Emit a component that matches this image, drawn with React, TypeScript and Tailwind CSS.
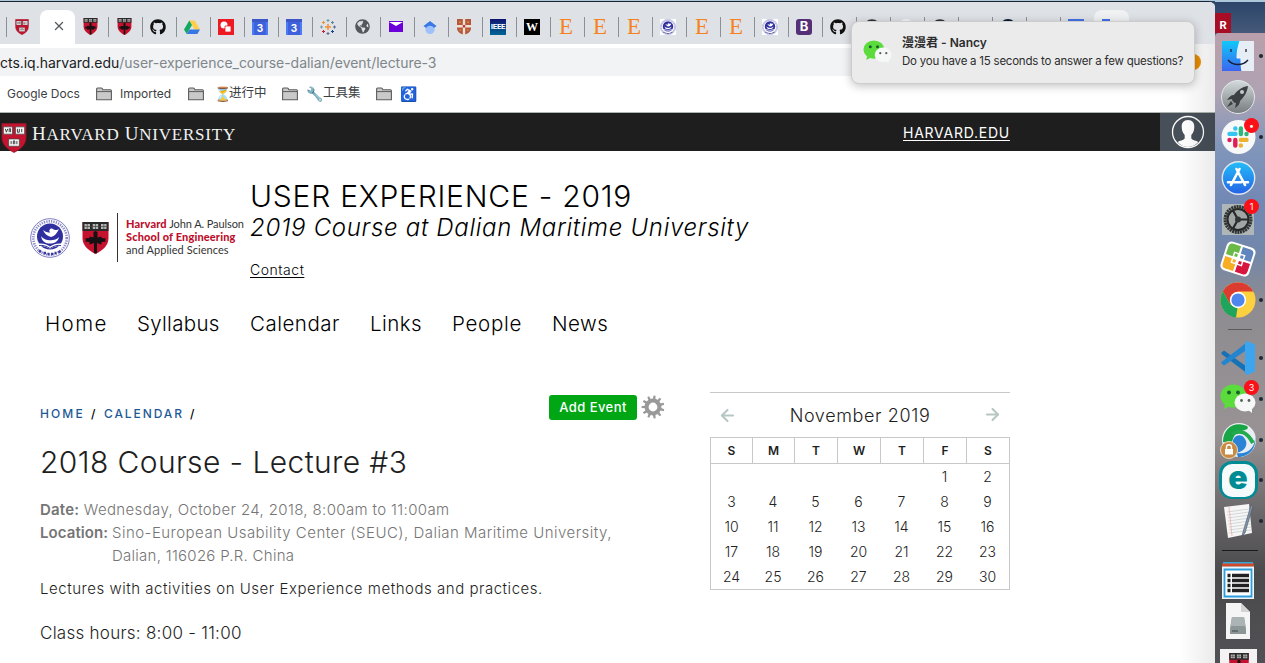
import React, { ReactNode } from "react";
import { FaGithub, FaGlobeAmericas } from "react-icons/fa";
import { ArrowLeft, ArrowRight, X } from "lucide-react";

function HarvardShield({ className }: { className: string }) {
  return (
    <svg viewBox="0 0 26 31" className={className}>
      <path d="M0.5 .5h25v14c0 8-5.500 12.500-12.500 16C6 27 .5 22.500 .5 14.500z" fill="#c4122f" stroke="#8b1a28" strokeWidth=".7" />
      <g fill="#fff" stroke="#444" strokeWidth=".8">
        <path d="M2 4h9.500v7.500H2zM14.500 4H24v7.500h-9.500zM7.500 16.500h11v7.500h-11z" />
      </g>
      <g fill="none" stroke="#333" strokeWidth="1">
        <path d="M4 6l1.200 3.500L6.500 6M8 9.500V6h1.500v3.500M16.500 6v3.500h2V6M21 6v3.500M10 18.500v3.500M12.300 22v-3.500h1.500V22M16 18.500v3.500" />
      </g>
    </svg>
  );
}

function SeasShield({ className }: { className: string }) {
  return (
    <svg viewBox="0 0 26 32" className={className}>
      <path d="M0 0h26v16c0 7-5 12-13 16C5 28 0 23 0 16z" fill="#c4122f" />
      <path d="M0 0h26v9H0z" fill="#2a2a2a" />
      <path d="M2 2h5.500v5H2zM10.200 2h5.500v5h-5.500zM18.500 2H24v5h-5.500z" fill="#b5b5b5" />
      <path d="M4.700 2v5M13 2v5M21.300 2v5M2 4.500h22" stroke="#444" strokeWidth=".7" />
      <path d="M11.500 31.200h3V21l4.500 1.500v-2.500l4.500-.5-1-1.500 1-1.500-4.500-.5v-1.500l-4 1V10l-2-1-2 1v5.500l-4-1V16l-4.500.5 1 1.500-1 1.500 4.500.5v2.500l4.500-1.500z" fill="#171012" />
    </svg>
  );
}

function Seal({ className }: { className: string }) {
  return (
    <svg viewBox="0 0 40 40" className={className}>
      <circle cx="20" cy="20" r="20" fill="#fff" />
      <circle cx="20" cy="20" r="19.300" fill="none" stroke="#5a5ab0" strokeWidth=".8" />
      <circle cx="20" cy="20" r="16.700" fill="none" stroke="#8a8ac8" strokeWidth="2.600" strokeDasharray="1.300 1.100" />
      <circle cx="20" cy="18.500" r="13" fill="#2f2f9f" />
      <path d="M13 12c2 4 4 6 8 7 4-1 6-4 8-8-3 2-4 1-7-.5-2-.5-4 2.500-1.500 4-3 0-5-.5-7.500-2.500zM11 18c3 5 14 6 18 1-1 5-5 6.500-9 6.500s-8-1.500-9-7.500z" fill="#fff" />
      <path d="M7 26c5-1 9 0 13 2.500C24 26 28 25 33 26v2.500c-5-1-9 0-13 2.500-4-2.500-8-3.500-13-2.500z" fill="#fff" />
      <path d="M9 27.500c4-.5 7.500.5 11 3 3.500-2.500 7-3.500 11-3" fill="none" stroke="#3a3a9d" />
      <path d="M9 32.500l2 1.500m2.500 1h2.500m1.500 1h2m1.500 0h2m1.500-1h2m2-.500l2-1.500" stroke="#3a3a9d" strokeWidth="2.600" />
    </svg>
  );
}

function WeChat({ className }: { className: string }) {
  return (
    <svg viewBox="0 0 36 30" className={className}>
      <ellipse cx="13.500" cy="12" rx="13" ry="11.500" fill="#5bdc3c" />
      <path d="M5 20l-1 5 6-3z" fill="#5bdc3c" />
      <circle cx="9" cy="8.500" r="1.900" fill="#14622a" />
      <circle cx="18" cy="8.500" r="1.900" fill="#14622a" />
      <ellipse cx="25" cy="18.500" rx="10.500" ry="9" fill="#f6f8f7" />
      <path d="M28 26l4 3v-5z" fill="#f6f8f7" />
      <circle cx="21.500" cy="16.500" r="1.400" fill="#55605c" />
      <circle cx="29" cy="16.500" r="1.400" fill="#55605c" />
    </svg>
  );
}

function CalendarIcon() {
  return (
    <svg viewBox="0 0 16 16" className="size-4">
      <path d="M0 0h16v16H0z" fill="#4a7df5" />
      <path d="M0 0h16v3H0z" fill="#3c57c7" />
      <path d="M2 3h12v13H2z" fill="#3f62dc" />
      <text x="8" y="12.500" textAnchor="middle" fontSize="10" fontWeight="700" fontFamily="Inter, sans-serif" fill="#fff">3</text>
    </svg>
  );
}

const Etsy = () => <span className="font-['Liberation_Serif',serif] text-[23px] leading-4 text-[#f58220]">E</span>;

const tabs: ReactNode[] = [
  <SeasShield className="h-[17px] w-[15px]" />,
  <SeasShield className="h-[17px] w-[15px]" />,
  <FaGithub className="size-4 text-[#111]" />,
  <svg viewBox="0 0 16 16" className="size-4">
    <path d="M5.300 1.500h5.400L16 10.500h-5.400z" fill="#ffcf48" />
    <path d="M5.300 1.500L8 6 2.700 15 0 10.500z" fill="#11a861" />
    <path d="M5.400 10.500H16L13.300 15H2.700z" fill="#3777e3" />
  </svg>,
  <svg viewBox="0 0 16 16" className="size-4">
    <path d="M0 0h16v16H0z" fill="#ec1b23" />
    <circle cx="6" cy="6" r="3.500" fill="#fff" />
    <path d="M7 7h6v6H7z" fill="#fff" stroke="#ec1b23" strokeWidth=".8" />
  </svg>,
  <CalendarIcon />,
  <CalendarIcon />,
  <svg viewBox="0 0 16 16" className="size-4" fill="none" strokeWidth="1">
    <path d="M8 5v6M5 8h6" stroke="#f28e2b" strokeWidth="1.500" />
    <path d="M3.500 2v3M2 3.500h3" stroke="#eb912c" />
    <path d="M3.500 11v3M2 12.500h3" stroke="#c72037" />
    <path d="M12.500 2v3M11 3.500h3" stroke="#59879b" />
    <path d="M12.500 11v3M11 12.500h3" stroke="#1f447e" />
    <path d="M8 0v3M6.500 1.500h3M1.500 6.500v3M0 8h3" stroke="#7099a6" />
    <path d="M8 13v3M6.500 14.500h3M14.500 6.500v3M13 8h3" stroke="#5b6591" />
  </svg>,
  <FaGlobeAmericas className="size-[15px] text-[#55585b]" />,
  <svg viewBox="0 0 14 11" className="h-[11px] w-3.5">
    <path d="M0 0h14v11H0z" fill="#6b00d8" />
    <path d="M0 1h14L7 5z" fill="#fff" />
  </svg>,
  <svg viewBox="0 0 16 16" className="size-4">
    <circle cx="8" cy="10.500" r="4.600" fill="#9fc1fb" />
    <path d="M1.500 7L8 2l6.500 5L12 9c-2-3-6-3-8 0z" fill="#3b78e7" />
  </svg>,
  <svg viewBox="0 0 14 16" className="h-4 w-3.5">
    <path d="M0 0h14v9c0 4-4 6-7 7-3-1-7-3-7-7z" fill="#b5573c" />
    <path d="M5.800 0h2.400v6H14v2.400H8.200V16H5.800V8.400H0V6h5.800z" fill="#f1dfd2" />
    <path d="M5.800 6h2.400v2.400H5.800z" fill="#b23a35" />
    <path d="M2 2.500h2v1.500H2zm8 0h2v1.500h-2zM2.500 10.500h1.500V12H2.500zm7.500 0h1.500V12H10z" fill="#c8923b" />
  </svg>,
  <span className="flex size-4 items-center justify-center bg-linear-to-b from-[#101070] to-[#006594] font-[Roboto,sans-serif] text-[8px] font-bold leading-none tracking-[-0.3px] text-white">IEEE</span>,
  <span className="flex size-4 items-center justify-center bg-black font-['Liberation_Serif',serif] text-[12px] font-bold leading-none text-white">W</span>,
  <Etsy />,
  <Etsy />,
  <Etsy />,
  <span className="size-4 bg-white"><Seal className="size-4" /></span>,
  <Etsy />,
  <Etsy />,
  <span className="size-4 bg-white"><Seal className="size-4" /></span>,
  <span className="flex size-4 items-center justify-center rounded-[3px] bg-[#563076] font-[Inter,sans-serif] text-[13px] font-bold leading-none text-white">B</span>,
  <FaGithub className="size-4 text-[#111]" />,
  <FaGithub className="size-4 text-[#333]" />,
  <span className="size-4 rounded-full bg-[#f6f6f6]" />,
  <FaGithub className="size-4 text-[#333]" />,
  null,
  <span className="size-4 rounded-full bg-[#0b1830]" />,
  null,
  <span className="size-4 bg-[#4472e8]" />,
];

function TabStrip() {
  return (
    <div className="flex h-[42px] items-end bg-[#dee1e6] pl-1.5">
      <div className="flex h-[35px] w-[34px] items-center">
        <span className="h-5 w-px bg-[#8d9094]" />
        <HarvardShield className="ml-2 h-4 w-3.5" />
      </div>
      <div className="flex h-[34px] w-[35px] items-center justify-center rounded-t-lg bg-white pb-0.5 pl-[3px]">
        <X className="size-3.5 text-[#55585c]" strokeWidth={2.2} />
      </div>
      {tabs.map((icon, i) => (
        <div key={i} className={i === 0 ? "-ml-px flex h-[35px] w-[34px] items-center" : "flex h-[35px] w-[34px] items-center"}>
          <span className={i === 0 ? "h-5 w-px" : "h-5 w-px bg-[#8d9094]"} />
          <span className="ml-1 flex w-[22px] items-center justify-center">{icon}</span>
        </div>
      ))}
      <div className="flex h-[34px] w-[35px] justify-center rounded-t-lg bg-[#f0f1f3] pt-[9px]">
        <span className="mr-3 h-4 w-2 bg-[#4472e8]" />
      </div>
    </div>
  );
}

function Folder() {
  return (
    <svg viewBox="0 0 16 14" className="h-3.5 w-4">
      <path d="M.6 12.800V2q0-1 1-1h3.600q.8 0 1.200.7l.5 1h7.500q1 0 1 1v9.100z" fill="#c9c9c9" stroke="#5c5c5c" strokeWidth="1.100" />
      <path d="M1 4.600h14" stroke="#5c5c5c" />
    </svg>
  );
}

function Bookmarks() {
  return (
    <div className="flex h-[37px] items-center border-b border-[#aeb5b1] bg-white pb-px pl-[7px] font-[Inter,'Noto_Sans_CJK_SC',sans-serif] text-[12px] tracking-[-0.02px] text-[#3c4043]">
      <span className="w-[89px]">Google Docs</span>
      <Folder />
      <span className="ml-2 w-[68px]">Imported</span>
      <Folder />
      <span className="ml-2.5 flex w-[68px] items-center whitespace-nowrap"><span className="w-[15px] text-[14px]">⏳</span><span className="text-[12.5px]">进行中</span></span>
      <Folder />
      <span className="ml-2 flex w-[70px] items-center whitespace-nowrap"><span className="w-[17px] text-[14px]">🔧</span><span className="text-[12.5px]">工具集</span></span>
      <Folder />
      <span className="ml-2 text-[14px]">♿</span>
    </div>
  );
}

function HarvardBar() {
  return (
    <div className="flex h-[38px] items-center bg-[#1e1e1e] text-white">
      <HarvardShield className="ml-[1px] mt-3 h-[30px] w-[26px] shrink-0" />
      <span className="ml-[5px] w-[871px] whitespace-nowrap pt-0.5 font-['Liberation_Serif',serif] text-[17px] leading-none tracking-[0.8px] text-[#f2f2f2]"><span className="text-[19px]">H</span>ARVARD <span className="text-[19px]">U</span>NIVERSITY</span>
      <span className="w-[257px] text-[14px] tracking-[0.75px] underline underline-offset-2">HARVARD.EDU</span>
      <div className="flex h-full w-[55px] items-center justify-center bg-[#474f58]">
        <svg viewBox="0 0 34 34" className="size-[34px]">
          <circle cx="17" cy="17" r="15.500" fill="none" stroke="#fff" strokeWidth="1.300" />
          <path d="M17 5c-4.500 0-6.300 3-6.300 6.500 0 3.800 1 6.500 3 8.500v3.500c-1.500 2-5 2-7 3.500 5.500 6.500 15 6.500 20.600 0-2-1.500-5.500-1.500-7-3.500V20c2-2 3-4.700 3-8.500C23.300 8 21.500 5 17 5z" fill="#fff" />
        </svg>
      </div>
    </div>
  );
}

function Masthead() {
  return (
    <header className="flex h-[143px] pl-[30px] text-black">
      <div className="mt-[62px] flex h-[49px] w-[220px] items-center">
        <Seal className="size-10 shrink-0" />
        <SeasShield className="ml-3 h-8 w-[27px] shrink-0" />
        <div className="ml-2 h-full w-px shrink-0 bg-[#333]" />
        <div className="ml-2 whitespace-nowrap pb-0.5 font-[Lato,sans-serif] text-[11px] leading-[13px] text-[#333]">
          <div className="tracking-[-0.09px]"><b className="font-black tracking-[0.14px] text-[#bd0f2c]">Harvard</b> John A. Paulson</div>
          <div className="font-black tracking-[0.14px] text-[#bd0f2c]">School of Engineering</div>
          <div className="tracking-[0.06px]">and Applied Sciences</div>
        </div>
      </div>
      <div className="whitespace-nowrap pt-[27px]">
        <h1 className="text-[30px] font-light leading-9 tracking-[0.77px]">USER EXPERIENCE - 2019</h1>
        <p className="text-[24px] font-light italic leading-7 tracking-[0.7px]">2019 Course at Dalian Maritime University</p>
        <p className="mt-[18px] text-[14px] font-[350] leading-5 tracking-[0.52px]"><a className="underline underline-offset-2">Contact</a></p>
      </div>
    </header>
  );
}

function Nav() {
  return (
    <nav className="flex h-[60px] items-center whitespace-nowrap pl-[45px] text-[20.5px] font-[350] text-black">
      <a className="w-[92px] tracking-[1.4px]">Home</a>
      <a className="w-[113px] tracking-[0.3px]">Syllabus</a>
      <a className="w-[120px] tracking-[0.5px]">Calendar</a>
      <a className="w-[82px] tracking-[0.45px]">Links</a>
      <a className="w-[100px] tracking-[0.7px]">People</a>
      <a className="tracking-[0.45px]">News</a>
    </nav>
  );
}

function Gear() {
  return (
    <svg viewBox="0 0 24 24" className="ml-1 size-6">
      <g fill="#999">
        {Array.from({ length: 11 }, (_, i) => (
          <path key={i} d="M10.700 4.500L11 .6h2l.3 3.900z" transform={`rotate(${i * 32.727 + 8} 12 12)`} />
        ))}
      </g>
      <circle cx="12" cy="12" r="6.400" fill="none" stroke="#999" strokeWidth="4" />
    </svg>
  );
}

function EventDetails() {
  return (
    <article className="w-[640px] whitespace-nowrap text-[#1e1e1e]">
      <div className="flex h-10 items-start pt-[3px]">
        <div className="mt-[9px] flex w-[509px] text-[12px] font-medium leading-5 text-[#1e5a96]">
          <a className="w-[51px] tracking-[2.1px]">HOME</a>
          <span className="w-[13px] text-black">/</span>
          <a className="w-[86px] tracking-[1.9px]">CALENDAR</a>
          <span className="text-black">/</span>
        </div>
        <a className="flex h-[25px] w-[88px] items-center justify-center rounded-[3px] bg-[#00a613] text-[13px] font-medium tracking-[0.45px] text-white">Add Event</a>
        <Gear />
      </div>
      <h2 className="mt-2.5 h-10 text-[30px] font-light leading-10 tracking-[0.39px]">2018 Course - Lecture #3</h2>
      <div className="mt-4 text-[15px] font-[350] leading-[23px] text-[#757575]">
        <p className="tracking-[0.36px]"><b className="font-semibold tracking-[0.2px]">Date:</b> Wednesday, October 24, 2018, 8:00am to 11:00am</p>
        <div className="flex">
          <b className="w-[72px] font-semibold tracking-[0.07px]">Location:</b>
          <p><span className="tracking-[0.48px]">Sino-European Usability Center (SEUC), Dalian Maritime University,</span><br /><span className="tracking-[0.27px]">Dalian, 116026 P.R. China</span></p>
        </div>
      </div>
      <p className="mt-2.5 text-[15px] font-[350] leading-[23px] tracking-[0.53px]">Lectures with activities on User Experience methods and practices.</p>
      <p className="mt-[22px] text-[17px] font-[350] leading-[23px] tracking-[0.26px]">Class hours: 8:00 - 11:00</p>
    </article>
  );
}

function Calendar() {
  const days: (number | null)[] = [null, null, null, null, null, ...Array.from({ length: 30 }, (_, i) => i + 1)];
  return (
    <aside className="ml-[30px] w-[300px] border-t border-[#c8c8c8] text-[#1e1e1e]">
      <div className="flex h-11 items-center justify-between px-2">
        <ArrowLeft className="size-[19px] text-[#b5c7c3]" strokeWidth={2.6} />
        <span className="text-[18px] font-[350] tracking-[0.62px]">November 2019</span>
        <ArrowRight className="mb-0.5 size-[19px] text-[#b5c7c3]" strokeWidth={2.6} />
      </div>
      <div className="border border-[#c8c8c8]">
        <div className="grid h-[26px] grid-cols-[42px_42px_43px_43px_43px_43px_42px] border-b border-[#c8c8c8] text-[12px] font-semibold leading-[26px]">
          {["S", "M", "T", "W", "T", "F", "S"].map((d, i) => (
            <span key={i} className="border-r border-[#c8c8c8] text-center last:border-r-0">{d}</span>
          ))}
        </div>
        <div className="grid grid-cols-[41px_42px_43px_43px_43px_43px_43px] text-center text-[14px] font-[350] leading-[25px] text-[#222]">
          {days.map((d, i) => <span key={i}>{d}</span>)}
        </div>
      </div>
    </aside>
  );
}

function Notification() {
  return (
    <div className="absolute left-[851px] top-[21px] flex h-[63px] w-[344px] rounded-lg border border-[#cdcdcf] bg-[#ebebec] pl-[11px] pt-3 text-[#2d2d2d] shadow-[0_2px_10px_rgba(0,0,0,0.25)]">
      <WeChat className="mt-1.5 h-6 w-[29px]" />
      <div className="ml-2.5 whitespace-nowrap font-[Inter,'Noto_Sans_CJK_SC',sans-serif] leading-[18px]">
        <div className="text-[12px] font-semibold">漫漫君 - Nancy</div>
        <div className="text-[11.5px] tracking-[-0.23px]">Do you have a 15 seconds to answer a few questions?</div>
      </div>
    </div>
  );
}

const art = "size-9 overflow-visible";
type Item = { dot?: boolean; badge?: string; icon: ReactNode };

const dockTop: Item[] = [
  { dot: true, icon: (
    <svg viewBox="0 0 36 36" className={art}>
      <defs><linearGradient id="fin" x2="0" y2="1"><stop stopColor="#10c8fa" /><stop offset="1" stopColor="#3c66f0" /></linearGradient></defs>
      <path d="M2 3h32v30H2z" fill="#e6edf5" />
      <path d="M2 3h18c-2 6-3 11-3 17h4c0 5 0 9 1 13H2z" fill="url(#fin)" />
      <path d="M20 3c-2 6-3 11-3 17h4c0 5 0 9 1 13" fill="none" stroke="#f3f8ff" />
      <path d="M11 11v3M26 11v3" stroke="#223" strokeWidth="1.300" />
      <path d="M8 22c5 6 15 6 20 0" fill="none" stroke="#182038" strokeWidth="1.400" />
    </svg>) },
  { icon: (
    <svg viewBox="0 0 36 36" className={art}>
      <defs><linearGradient id="rok" x2="0" y2="1"><stop stopColor="#d2dadc" /><stop offset="1" stopColor="#777c7d" /></linearGradient></defs>
      <circle cx="18" cy="18" r="16.500" fill="url(#rok)" stroke="#e3e7e8" />
      <path d="M28 7c-7 1-11 5-14 9-3 0-5 2-7 5l5-1c0 2 2 4 4 4l-1 5c3-2 5-4 5-7 4-4 7-8 8-15z" fill="#3c4043" />
      <circle cx="22" cy="13" r="2" fill="#c3c9cb" />
      <path d="M11 22l-4 6 6-3" fill="#3c4043" />
    </svg>) },
  { dot: true, badge: "•", icon: (
    <svg viewBox="0 0 36 36" className={art}>
      <circle cx="18.500" cy="18" r="17" fill="#f7f8f8" />
      <g fill="none" strokeWidth="4.400" strokeLinecap="round">
        <path d="M15.300 9.500h.1M9.500 14.900h6" stroke="#36c5f0" />
        <path d="M20.900 9.500v5.500M26.500 14.900v.1" stroke="#2eb67d" />
        <path d="M26.500 20.900h-5.600M20.900 26.500h-.1" stroke="#ecb22e" />
        <path d="M15.300 26.500V21M9.500 20.900v.1" stroke="#e01e5a" />
      </g>
    </svg>) },
  { icon: (
    <svg viewBox="0 0 36 36" className={art}>
      <defs><linearGradient id="aps" x2="0" y2="1"><stop stopColor="#23bdf8" /><stop offset="1" stopColor="#2463e6" /></linearGradient></defs>
      <circle cx="18.500" cy="18" r="16.200" fill="url(#aps)" stroke="#e2e6ef" strokeWidth="1.400" />
      <path d="M19.500 9L11 25M16.500 9L25 25M8 22.300h13M25 22.300h3" fill="none" stroke="#fff" strokeWidth="2.600" strokeLinecap="round" />
    </svg>) },
  { badge: "1", icon: (
    <svg viewBox="0 0 36 36" className={art}>
      <path d="M2 3h32v31H2z" fill="#aeb6b8" />
      <circle cx="18" cy="18.500" r="13" fill="#8d9392" stroke="#303232" strokeWidth="3" strokeDasharray="2 .7" />
      <circle cx="18" cy="18.500" r="10.500" fill="#a0a6a5" stroke="#272929" strokeWidth="2" />
      <path d="M18 18.500H28M18 18.500L13 9.500M18 18.500L13 27.500" stroke="#272929" strokeWidth="2.200" />
      <circle cx="18" cy="18.500" r="3" fill="#333" />
    </svg>) },
  { icon: (
    <svg viewBox="0 0 36 36" className={art}>
      <g transform="rotate(18 18 18)">
        <rect x="3" y="3" width="30" height="30" rx="5" fill="#fff" />
        <path d="M9 5h8v12H5V9q0-4 4-4z" fill="#6bb946" />
        <path d="M19 5h8q4 0 4 4v8H19z" fill="#6185bd" />
        <path d="M5 19h12v12H9q-4 0-4-4z" fill="#f7ae24" />
        <path d="M19 19h12v8q0 4-4 4h-8z" fill="#d8153c" />
        <path d="M12 12h12v12H12z" fill="#fff" />
        <path d="M13.500 13.500h3v3h-3z" fill="#6bb946" /><path d="M19.500 13.500h3v3h-3z" fill="#6185bd" />
        <path d="M13.500 19.500h3v3h-3z" fill="#f7ae24" /><path d="M19.500 19.500h3v3h-3z" fill="#d8153c" />
      </g>
    </svg>) },
  { dot: true, icon: (
    <svg viewBox="0 0 36 36" className={art}>
      <circle cx="18" cy="18" r="17.500" fill="#fcd03f" />
      <path d="M18 18L10.500 22.500 2.800 9.200A17.500 17.500 0 0 1 33.200 9.500H18z" fill="#dc3c30" />
      <path d="M2.800 9.200L10.500 22.500l7 3.500-1.500 9.400A17.500 17.500 0 0 1 2.800 9.200z" fill="#1ea45b" />
      <circle cx="18" cy="18" r="8.200" fill="#fff" />
      <circle cx="18" cy="18" r="6.600" fill="#4c86ee" />
    </svg>) },
];

const dockApps: Item[] = [
  { dot: true, icon: (
    <svg viewBox="0 0 36 36" className={art}>
      <path d="M1.500 12.500L4 10.500 28 27.500V34L1.500 14z" fill="#1572b6" />
      <path d="M1.500 23.500L4 25.500 28 9V1.500L1.500 22z" fill="#2385cf" />
      <path d="M27 1l8 3.500v27L27 35l-2-2V3z" fill="#3da5ee" />
    </svg>) },
  { dot: true, badge: "3", icon: <WeChat className="h-[30px] w-9" /> },
  { dot: true, icon: (
    <svg viewBox="0 0 36 36" className={art}>
      <circle cx="19" cy="18" r="17" fill="#e9eef2" />
      <path d="M3 20C3 8 12 0 24 3c5 1 5 4 1 5-8 1-12 5-13 13z" fill="#17a545" />
      <path d="M13 21c-1-7 8-11 12-4 4 6-1 13-9 14 12 2 20-6 19-17 2 11-5 21-17 21z" fill="#2b83d8" />
      <path d="M12 12c8-5 15-2 21 9" fill="none" stroke="#23aa4c" strokeWidth="4" />
      <circle cx="9" cy="28" r="8.500" fill="#c98a43" stroke="#ecd9bf" />
      <path d="M5 27h8v5.500H5z" fill="#fff" />
      <path d="M6.500 27v-2c0-3 5-3 5 0v2" fill="none" stroke="#fff" strokeWidth="1.400" />
    </svg>) },
  { dot: true, icon: (
    <span className="flex h-[38px] w-[39px] shrink-0 items-center justify-center rounded-[13px] bg-[#018c95]">
      <span className="flex size-[33px] items-center justify-center rounded-[10px] bg-[#f5fafa] pb-1 font-[Inter,sans-serif] text-[32px] font-black leading-none text-[#018c95]">e</span>
    </span>) },
  { dot: true, icon: (
    <svg viewBox="0 0 36 36" className={art}>
      <path d="M4 4l25-3 3 29-24 5z" fill="#f6f6f4" />
      <path d="M7 9l22-3M7 12l22-3M8 15l22-3M8 18l22-3M8 21l22-3M9 24l22-3M9 27l22-3M9 30l22-3" stroke="#c9ced4" strokeWidth=".8" />
      <path d="M9 4l3 29" stroke="#eda5a5" strokeWidth=".7" />
      <path d="M31 2L23 29l-1 4 3-3 8-27z" fill="#8093a8" stroke="#4b5969" strokeWidth=".6" />
    </svg>) },
];

const dockFiles: Item[] = [
  { icon: (
    <svg viewBox="0 0 36 38" className="h-[38px] w-9">
      <path d="M3 1h30v2H3z" fill="#35a3dc" /><path d="M2 2.500h32v3H2z" fill="#d04a2a" />
      <path d="M2 5.500h32V38H2z" fill="#eef4f8" />
      <path d="M4.500 8.500h27v27h-27z" fill="#fff" stroke="#2d9edb" strokeWidth="1.800" />
      <path d="M7.500 14.500h3M7.500 19.500h3M7.500 24.500h3M7.500 29.500h3M12 14.500h17M12 19.500h17M12 24.500h17M12 29.500h17" stroke="#222" strokeWidth="3.300" />
    </svg>) },
  { icon: (
    <svg viewBox="0 0 36 36" className={art}>
      <path d="M6 0h15l9 9v27H6z" fill="#f5f5f5" /><path d="M21 0v9h9z" fill="#d2d4d4" />
      <path d="M12 14h12l2 12v5H10v-5z" fill="#8d9697" /><path d="M12 14h12l1.500 9h-15z" fill="#abb3b4" />
      <path d="M12 28h6" stroke="#3d4647" />
    </svg>) },
];

function DockItem({ item }: { item: Item }) {
  return (
    <div className="relative flex h-[40.6px] shrink-0 items-center pl-[5px]">
      <span className="flex w-9 justify-center">{item.icon}</span>
      {item.dot && <span className="ml-[3px] size-1 rounded-full bg-[#222630]" />}
      {item.badge && <span className="absolute left-[29px] top-px flex size-[15px] items-center justify-center rounded-full bg-[#fb1018] text-[9px] leading-none text-white">{item.badge}</span>}
    </div>
  );
}

function Dock() {
  return (
    <div className="w-[50px] overflow-hidden bg-linear-to-b from-[#2a4468] to-[#465a7a] to-[34px]">
      <div className="flex h-[33px] items-end border-t-2 border-[#adc7da]"><span className="flex h-5 w-4 items-end justify-center bg-[#a70d24] text-[11px] font-bold leading-4 text-white">R</span></div>
      <div className="flex h-[630px] flex-col overflow-hidden rounded-tl-[4px] bg-[linear-gradient(#b99fab_0px,#afa3b3_60px,#8397bb_110px,#7188b4_170px,#7287a9_220px,#8e8c91_270px,#989294_400px,#5f5d60_500px,#4a494c_540px,#515054_630px)] pt-[3px]">
        {dockTop.map((item, i) => <DockItem key={i} item={item} />)}
        <div className="flex h-[18px] shrink-0 items-center pl-[13px]"><span className="h-px w-6 bg-[#5b5a5e]" /></div>
        {dockApps.map((item, i) => <DockItem key={i} item={item} />)}
        <div className="flex h-[19px] shrink-0 items-center pl-[7px]"><span className="h-px w-9 bg-[#1a1a1a]" /></div>
        {dockFiles.map((item, i) => <DockItem key={i} item={item} />)}
        <div className="ml-[5px] mt-2 flex h-9 w-[37px] shrink-0 justify-center bg-[#f3f3f3] pt-1"><SeasShield className="h-6 w-5" /></div>
      </div>
    </div>
  );
}

export default function App() {
  return (
    <div className="relative flex h-[663px] w-[1265px] overflow-hidden bg-[#344a6b] font-[Inter,sans-serif]">
      <div className="w-[1215px] shrink-0 border-t border-[#adc7da]">
        <div className="relative h-[662px] overflow-hidden rounded-tr-md border-t border-[#1b2430] bg-white">
          <TabStrip />
          <div className="h-8 bg-white pt-1">
            <div className="flex h-7 w-[1198px] items-center rounded-r-full bg-[#f1f3f4] text-[14px] tracking-[-0.03px] text-[#202124]">
              <span>cts.iq.harvard.edu</span><span className="text-[#80868b]">/user-experience_course-dalian/event/lecture-3</span>
              <span className="ml-auto mr-[-3px] size-4 rounded-full bg-[#f29100]" />
            </div>
          </div>
          <Bookmarks />
          <HarvardBar />
          <Masthead />
          <Nav />
          <main className="flex pl-10 pt-[38px]">
            <EventDetails />
            <Calendar />
          </main>
          <div className="absolute right-0 top-[42px] h-[620px] w-9 bg-linear-to-r from-transparent to-black/8" />
        </div>
      </div>
      <Dock />
      <Notification />
    </div>
  );
}
